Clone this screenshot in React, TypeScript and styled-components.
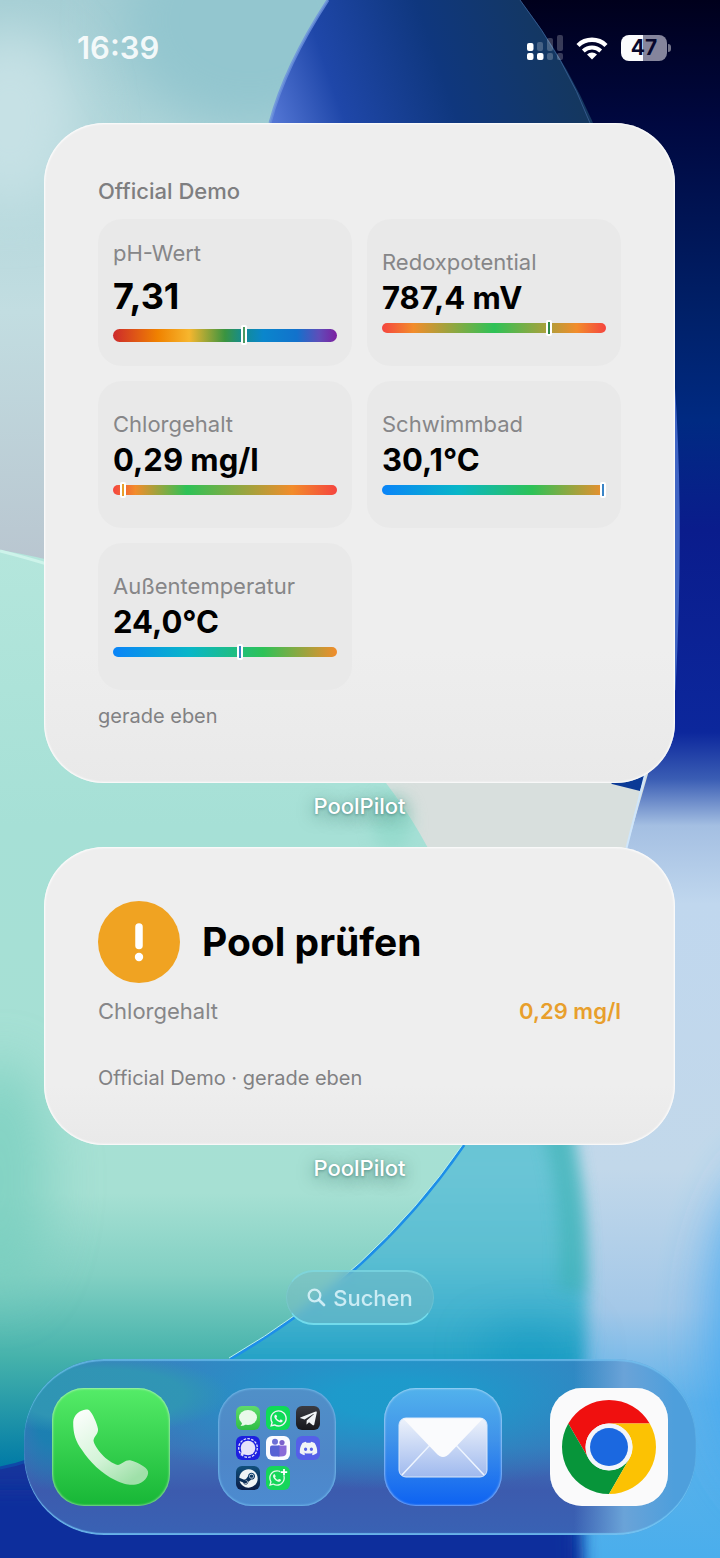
import React from "react";
import styled, { createGlobalStyle } from "styled-components";
import { FaDiscord, FaSteam, FaTelegramPlane, FaWhatsapp } from "react-icons/fa";

const GlobalStyle = createGlobalStyle`
  * {
    box-sizing: border-box;
  }

  body {
    margin: 0;
    font-family: Inter, "Liberation Sans", sans-serif;
    -webkit-font-smoothing: antialiased;
  }
`;

// Screen
const Screen = styled.div`
  position: relative;
  z-index: 0;
  display: flex;
  flex-direction: column;
  min-height: 100vh;
  padding-bottom: 23px;
  overflow: hidden;
`;

const WallpaperSvg = styled.svg`
  position: absolute;
  inset: 0;
  z-index: -1;
  width: 100%;
  height: 100%;
`;

// Status bar
const StatusBar = styled.header`
  display: flex;
  align-items: center;
  justify-content: space-between;
  height: 96px;
  margin-bottom: 27px;
  padding: 0 49px 0 77px;
`;

const Clock = styled.time`
  color: rgba(255, 255, 255, 0.88);
  font-size: 31px;
  font-weight: 600;
  line-height: 40px;
`;

const StatusIcons = styled.div`
  display: flex;
  align-items: center;
  gap: 13px;
`;

const Battery = styled.div`
  display: flex;
  align-items: center;
  gap: 1px;

  &::after {
    content: "";
    width: 3px;
    height: 8px;
    border-radius: 0 4px 4px 0;
    background: rgba(255, 255, 255, 0.45);
  }
`;

const BatteryBody = styled.div<{ $level: number }>`
  width: 46px;
  height: 26px;
  border-radius: 8px;
  background: linear-gradient(
    to right,
    #fbfbfd ${(p) => p.$level}%,
    #85859c ${(p) => p.$level}%
  );
  color: #07082c;
  font-size: 21px;
  font-weight: 700;
  line-height: 26px;
  text-align: center;
`;

// Widgets
const Widgets = styled.main`
  display: flex;
  flex-direction: column;
  gap: 27px;
  padding: 0 45px 0 44px;
`;

const WidgetSlot = styled.section`
  display: flex;
  flex-direction: column;
  gap: 9px;
`;

const Widget = styled.div`
  padding: 54px;
  border-radius: 60px;
  background: linear-gradient(#eeeeee 80%, #e9e9e9);
  box-shadow: inset 0 0 2px 1px rgba(255, 255, 255, 0.9);
`;

const WidgetName = styled.div`
  color: #fff;
  font-size: 22px;
  font-weight: 500;
  line-height: 28px;
  text-align: center;
  text-shadow: 0 1px 3px rgba(0, 60, 60, 0.4), 0 4px 16px rgba(0, 70, 60, 0.5);
`;

const PoolName = styled.h2`
  margin: 0 0 14px;
  color: #7e7e80;
  font-size: 22px;
  font-weight: 500;
  line-height: 28px;
`;

const Caption = styled.p`
  margin: 0;
  color: #818183;
  font-size: 20px;
  line-height: 26px;
`;

const TileGrid = styled.div`
  display: grid;
  grid-template-columns: 1fr 1fr;
  gap: 15px;
  margin-bottom: 13px;
`;

const Tile = styled.div<{ $large?: boolean }>`
  display: flex;
  flex-direction: column;
  justify-content: center;
  gap: ${(p) => (p.$large ? 7 : 3)}px;
  height: 147px;
  padding: 0 15px 1px;
  border-radius: 24px;
  background: #e9e9e9;
`;

const Label = styled.span`
  color: #868688;
  font-size: 22px;
  line-height: 28px;
`;

const Value = styled.strong<{ $large?: boolean }>`
  color: #000;
  font-size: ${(p) => (p.$large ? 36 : 31)}px;
  font-weight: 700;
  line-height: ${(p) => (p.$large ? 44 : 38)}px;
`;

const Gauge = styled.div<{ $large?: boolean }>`
  position: relative;
  display: flex;
  align-items: center;
  height: ${(p) => (p.$large ? 20 : 16)}px;
`;

const Track = styled.div<{ $scale: string; $large?: boolean }>`
  flex: 1;
  height: ${(p) => (p.$large ? 13 : 10)}px;
  border-radius: 7px;
  background: linear-gradient(to right, ${(p) => p.$scale});
`;

const Marker = styled.div<{ $color: string }>`
  position: absolute;
  top: 0;
  bottom: 0;
  width: 6px;
  margin-left: -4px;
  border: 2px solid #fff;
  border-radius: 2px;
  background: ${(p) => p.$color};
`;

// Alert widget
const AlertHead = styled.div`
  display: flex;
  align-items: center;
  gap: 22px;
  margin-bottom: 14px;
`;

const AlertBadge = styled.svg`
  flex: none;
  width: 82px;
  height: 82px;
`;

const AlertTitle = styled.h1`
  margin: 0;
  color: #000;
  font-size: 39px;
  font-weight: 700;
  line-height: 48px;
`;

const AlertRow = styled.div`
  display: flex;
  justify-content: space-between;
  margin-bottom: 40px;
`;

const AlertValue = styled.span`
  color: #e89f2c;
  font-size: 22px;
  font-weight: 600;
  line-height: 28px;
`;

// Search pill
const SearchButton = styled.button`
  display: flex;
  align-items: center;
  align-self: center;
  justify-content: center;
  gap: 7px;
  height: 55px;
  margin: auto 0 34px;
  padding: 0 20px;
  border: 1px solid rgba(140, 235, 245, 0.2);
  border-top: 2px solid rgba(130, 225, 235, 0.6);
  border-bottom: 2px solid rgba(120, 230, 245, 0.8);
  border-radius: 28px;
  background: rgba(120, 185, 195, 0.5);
  backdrop-filter: blur(6px);
  color: rgba(222, 245, 252, 0.85);
  font: 500 22px/28px Inter, "Liberation Sans", sans-serif;
`;

// Dock
const Dock = styled.nav`
  display: flex;
  align-items: center;
  justify-content: space-between;
  margin: 0 24px;
  padding: 29px 28px;
  border-radius: 80px;
  background:
    radial-gradient(ellipse 130px 40px at 76px 36px, rgba(48, 150, 180, 0.95) 65%, transparent),
    radial-gradient(ellipse 40px 70px at 26px 62px, rgba(20, 130, 175, 0.8) 30%, transparent),
    linear-gradient(to right, transparent 550px, #6aa3d8 600px, #4e9fdc 650px),
    radial-gradient(ellipse 300px 90px at 370px 40px, rgba(28, 156, 204, 0.95) 20%, transparent),
    linear-gradient(#3b7fbf, #3e72b8 50%, #3c5bae 75%, #3962b4);
  box-shadow:
    inset 0 2px 1px rgba(120, 200, 245, 0.65),
    inset 0 -2px 1px rgba(120, 205, 250, 0.75);
`;

const AppIcon = styled.a<{ $fill: string }>`
  display: block;
  width: 118px;
  height: 118px;
  border-radius: 32px;
  background: ${(p) => p.$fill};
  box-shadow: inset 0 0 2px 1px rgba(255, 255, 255, 0.45);

  > svg {
    display: block;
    width: 100%;
    height: 100%;
  }
`;

const Folder = styled.a`
  display: grid;
  grid-template-columns: repeat(3, 24px);
  grid-auto-rows: 24px;
  gap: 6px;
  width: 118px;
  height: 118px;
  padding: 18px;
  border-radius: 34px;
  background: linear-gradient(#5090c8, #4e86c8 60%, #4c8bd0);
  box-shadow: inset 0 0 2px 1px rgba(125, 200, 245, 0.7);
`;

const MiniApp = styled.span<{ $fill: string }>`
  display: flex;
  align-items: center;
  justify-content: center;
  border-radius: 6px;
  background: ${(p) => p.$fill};
  color: #f1f4f6;
  font-size: 19px;
`;

const Wallpaper = () => (
  <WallpaperSvg viewBox="0 0 720 1558" preserveAspectRatio="xMidYMid slice" aria-hidden>
    <defs>
      <linearGradient id="sky" x1="0" y1="0" x2="0" y2="1">
        <stop offset="0" stopColor="#a5ced4" />
        <stop offset="0.1" stopColor="#b0d6da" />
        <stop offset="0.2" stopColor="#c2dde1" />
        <stop offset="0.36" stopColor="#b9c6d0" />
      </linearGradient>
      <linearGradient id="lens" x1="270" y1="140" x2="560" y2="40" gradientUnits="userSpaceOnUse">
        <stop offset="0" stopColor="#5a7cda" />
        <stop offset="0.25" stopColor="#1f47a9" />
        <stop offset="0.6" stopColor="#0f377e" />
        <stop offset="1" stopColor="#14375f" />
      </linearGradient>
      <linearGradient id="navy" x1="0" y1="0" x2="0" y2="1">
        <stop offset="0" stopColor="#00001c" />
        <stop offset="0.08" stopColor="#000840" />
        <stop offset="0.2" stopColor="#002068" />
        <stop offset="0.27" stopColor="#002a82" />
        <stop offset="0.34" stopColor="#0a1c8c" />
        <stop offset="0.47" stopColor="#0c279c" />
        <stop offset="0.5" stopColor="#3a5db4" />
        <stop offset="0.53" stopColor="#a4bfe2" />
        <stop offset="0.58" stopColor="#c0d7ee" />
        <stop offset="0.75" stopColor="#c2d8ea" />
        <stop offset="0.84" stopColor="#a4c8e8" />
        <stop offset="0.9" stopColor="#60b2ea" />
        <stop offset="1" stopColor="#4aaeec" />
      </linearGradient>
      <linearGradient id="leaf" x1="0" y1="0" x2="0" y2="1">
        <stop offset="0" stopColor="#b4e6dc" />
        <stop offset="0.3" stopColor="#a6e0d6" />
        <stop offset="0.7" stopColor="#a6e0d3" />
        <stop offset="0.79" stopColor="#82d0c3" />
        <stop offset="0.88" stopColor="#45b2ab" />
        <stop offset="1" stopColor="#007aa6" />
      </linearGradient>
      <linearGradient id="orb" x1="0" y1="1000" x2="0" y2="1558" gradientUnits="userSpaceOnUse">
        <stop offset="0" stopColor="#5cbfcb" />
        <stop offset="0.3" stopColor="#6ac5d6" />
        <stop offset="0.45" stopColor="#5cbfd2" />
        <stop offset="0.56" stopColor="#42b2cf" />
        <stop offset="0.66" stopColor="#1f9fc4" />
        <stop offset="0.8" stopColor="#1566c0" />
        <stop offset="1" stopColor="#0a2e9c" />
      </linearGradient>
      <filter id="soft8" filterUnits="userSpaceOnUse" x="-200" y="-200" width="1120" height="1960">
        <feGaussianBlur stdDeviation="8" />
      </filter>
      <filter id="soft26" filterUnits="userSpaceOnUse" x="-200" y="-200" width="1120" height="1960">
        <feGaussianBlur stdDeviation="26" />
      </filter>
    </defs>

    <rect width="720" height="1558" fill="url(#sky)" />
    <ellipse cx="250" cy="20" rx="130" ry="110" fill="#93c6cf" filter="url(#soft26)" />
    <ellipse cx="10" cy="120" rx="70" ry="90" fill="#c6e1e5" filter="url(#soft26)" />

    <path d="M500 0H720V1558H520V600Z" fill="url(#navy)" />
    <ellipse cx="780" cy="1330" rx="70" ry="170" fill="#3fa8f2" opacity="0.9" filter="url(#soft26)" />
    <path d="M328 0Q285 66 270 123V200H620Q590 90 520 0Z" fill="url(#lens)" />
    <path d="M328 0Q285 66 270 123" fill="none" stroke="#6a90dc" strokeWidth="3" opacity="0.8" />
    <path d="M520 0Q566 60 590 123" fill="none" stroke="#33588c" strokeWidth="1" />
    <path d="M672 380Q682 520 673 690" fill="none" stroke="#3f64c4" strokeWidth="5" />

    {/* pale gap between the two widgets */}
    <path d="M360 760H652L626 850H360Z" fill="#d8dfdd" />
    <path d="M612 784L640 791L645 775L600 770Z" fill="#0b3a96" />
    <path d="M645 775L626 850" stroke="#cfe6fb" strokeWidth="2" />

    <path
      d="M440 1000H540Q598 1180 584 1380Q580 1490 584 1600H-60V1400Z"
      fill="url(#orb)"
      filter="url(#soft8)"
    />
    <path
      d="M548 1100Q578 1200 572 1290"
      fill="none"
      stroke="#3bb0b0"
      strokeWidth="26"
      opacity="0.55"
      filter="url(#soft8)"
    />
    <ellipse cx="530" cy="1350" rx="50" ry="16" fill="#0c8fbd" opacity="0.7" filter="url(#soft26)" />
    <path d="M0 1462Q140 1432 234 1359H260V1558H0Z" fill="#15349c" />
    <path d="M-60 1490H572V1620H-60Z" fill="#0e2f9c" filter="url(#soft8)" />

    <path
      d="M0 550Q240 590 386 783Q460 880 478 1000Q490 1080 464 1145Q375 1275 230 1359Q130 1440 0 1468Z"
      fill="url(#leaf)"
    />
    <path d="M0 551Q24 557 60 568" fill="none" stroke="#cdf3ea" strokeWidth="3" />
    <ellipse cx="392" cy="822" rx="20" ry="30" fill="#86d6c4" opacity="0.5" filter="url(#soft8)" />
    <ellipse cx="0" cy="1180" rx="50" ry="120" fill="#74cdbd" opacity="0.7" filter="url(#soft26)" />
    <path d="M464 1145Q375 1275 230 1359" fill="none" stroke="#1d8fe8" strokeWidth="3" />
    <path d="M463 1144Q374 1274 229 1358" fill="none" stroke="#b9f0ee" strokeWidth="1" />
    <path d="M0 1468Q16 1465 30 1460" fill="none" stroke="#0f49a8" strokeWidth="3" />
  </WallpaperSvg>
);

const SignalIcon = () => (
  <svg width="36" height="26" viewBox="0 0 36 26" fill="#fff" aria-label="Mobilfunk" role="img">
    <rect x="0" y="8" width="6.500" height="8" rx="2" />
    <g opacity="0.22">
      <rect x="10" y="7" width="6" height="9" rx="2" />
      <rect x="20" y="3" width="6" height="13" rx="2" />
      <rect x="30" y="0" width="6" height="16" rx="2" />
      <rect x="20" y="18" width="6" height="7" rx="2" />
      <rect x="30" y="18" width="6" height="7" rx="2" />
    </g>
    <rect x="0" y="18" width="6.500" height="7" rx="2" />
    <rect x="10" y="18" width="6.500" height="7" rx="2" />
  </svg>
);

const WifiIcon = () => (
  <svg width="32" height="24" viewBox="0 0 32 24" fill="none" aria-label="WLAN" role="img">
    <path d="M2 9.500a20 20 0 0 1 28 0" stroke="#fff" strokeWidth="4.400" />
    <path d="M7.300 15a12.600 12.600 0 0 1 17.400 0" stroke="#fff" strokeWidth="4" />
    <path d="M16 23.500L11 18.400a7.200 7.200 0 0 1 10 0Z" fill="#fff" />
  </svg>
);

const SearchIcon = () => (
  <svg width="19" height="19" viewBox="0 0 19 19" fill="none" stroke="currentColor" strokeLinecap="round">
    <circle cx="7.500" cy="7.500" r="5.800" strokeWidth="2.300" />
    <path d="M12 12L17 17" strokeWidth="2.800" />
  </svg>
);

const PhoneGlyph = () => (
  <svg viewBox="0 0 118 118">
    <defs>
      <linearGradient id="handset" x1="0" y1="0" x2="0.700" y2="1">
        <stop offset="0" stopColor="#fff" />
        <stop offset="0.600" stopColor="#d5f4d9" />
        <stop offset="1" stopColor="#9fe0a9" />
      </linearGradient>
    </defs>
    <path
      d="M34 21.500C28 22 21.500 27 21.200 34C21 46 24 54 30 62C37 73 50 86 63 92C72 96.500 78 97.500 84 96.500C92 95 97 88 96 83.500C95 79 85 74 79 72.500C73 71.500 71 76 66 77C61 76 54 71 50 66.500C45 61 42 56 41.500 52.500C42 48 46.500 46 46 41C45 35 40.500 25.500 37.500 22.500C36.500 21.500 35.500 21.300 34 21.500Z"
      fill="url(#handset)"
    />
  </svg>
);

const MailGlyph = () => (
  <svg viewBox="0 0 118 118">
    <defs>
      <linearGradient id="envelope" x1="0" y1="0" x2="0" y2="1">
        <stop offset="0" stopColor="#eef3fb" />
        <stop offset="1" stopColor="#9fb9ee" />
      </linearGradient>
    </defs>
    <rect x="15" y="30" width="88" height="59" rx="7" fill="url(#envelope)" stroke="#d8e8fb" />
    <path d="M18 87L46 57M100 87L72 57" stroke="#eef5ff" strokeWidth="1.500" />
    <path d="M19 30.500H99L66 65Q59 73 52 65Z" fill="#fafbfd" />
  </svg>
);

const ChromeGlyph = () => (
  <svg viewBox="0 0 118 118">
    <path d="M18.300 35.500A47 47 0 0 1 99.700 35.500H59A23.500 23.500 0 0 0 38.700 70.700Z" fill="#f0100f" />
    <path d="M18.300 35.500L38.700 70.700A23.500 23.500 0 0 0 79.300 70.700L59 106A47 47 0 0 1 18.300 35.500Z" fill="#07953a" />
    <path d="M99.700 35.500A47 47 0 0 1 59 106L79.300 70.700A23.500 23.500 0 0 0 59 35.500Z" fill="#fcc203" />
    <circle cx="59" cy="59" r="23.500" fill="#f3f5fa" />
    <circle cx="59" cy="59" r="19" fill="#1b68e0" />
  </svg>
);

const BubbleGlyph = () => (
  <svg width="20" height="20" viewBox="0 0 20 20" fill="#e9f9ea">
    <ellipse cx="10" cy="9.500" rx="9" ry="7.500" />
    <path d="M4 13Q4.500 16.500 2.500 18Q6.500 18 8.500 15.500Z" />
  </svg>
);

const SignalAppGlyph = () => (
  <svg width="22" height="22" viewBox="0 0 22 22">
    <circle cx="11" cy="11" r="9.300" fill="none" stroke="#e4e2fb" strokeWidth="1.300" strokeDasharray="2.600 1.300" />
    <circle cx="11" cy="11" r="7.300" fill="#e6e2fa" />
    <path d="M5 13L3.500 18.500L9 17Z" fill="#e6e2fa" />
  </svg>
);

const TeamsGlyph = () => (
  <svg width="18" height="20" viewBox="0 0 18 20">
    <circle cx="6" cy="3.800" r="3" fill="#6b6fd6" />
    <circle cx="13" cy="4.500" r="2.600" fill="#7c62cc" />
    <path d="M9 7.500H17.500V14Q17.500 18.500 12 18.500H9Z" fill="#8a6ad8" />
    <path d="M1 9.500Q1 7.500 3 7.500H10.500V18.500H5Q1 18.500 1 14Z" fill="#5661d4" />
  </svg>
);

const WhatsAppPlus = () => (
  <svg width="20" height="20" viewBox="0 0 20 20">
    <FaWhatsapp x="0" y="1" size={18} color="#e3fbe8" />
    <path d="M16 0.500V8M12.300 4.200H19.700" stroke="#16d65a" strokeWidth="5" />
    <path d="M16 1V7.400M12.800 4.200H19.200" stroke="#fff" strokeWidth="1.800" />
  </svg>
);

const scales = {
  ph: "#cd2a2c, #f08200 20%, #f6b62e 34%, #3a9440 50%, #138c92 58%, #0a86cc 67%, #1272cc 82%, #5f4db9 92%, #7d1fa0",
  redox: "#f5453f, #f28c2b 14%, #2dc257 50%, #f28c2b 87%, #f5453f",
  chlorine: "#f5453f, #f28c2b 10%, #2dc257 33%, #f28c2b 80%, #f5453f",
  temperature: "#0a84f8, #08b6c8 34%, #2dc257 67%, #f28c2b",
};

interface Reading {
  label: string;
  value: string;
  scale: string;
  position: number;
  marker: string;
  large?: boolean;
}

const readings: Reading[] = [
  { label: "pH-Wert", value: "7,31", scale: scales.ph, position: 59, marker: "#4b9a62", large: true },
  { label: "Redoxpotential", value: "787,4 mV", scale: scales.redox, position: 75, marker: "#2f8a48" },
  { label: "Chlorgehalt", value: "0,29 mg/l", scale: scales.chlorine, position: 5, marker: "#e89f2c" },
  { label: "Schwimmbad", value: "30,1°C", scale: scales.temperature, position: 99, marker: "#3a84c6" },
  { label: "Außentemperatur", value: "24,0°C", scale: scales.temperature, position: 57, marker: "#3a84c6" },
];

const ReadingTile: React.FC<Reading> = ({ label, value, scale, position, marker, large }) => (
  <Tile $large={large}>
    <Label>{label}</Label>
    <Value $large={large}>{value}</Value>
    <Gauge $large={large}>
      <Track $scale={scale} $large={large} />
      <Marker $color={marker} style={{ left: `${position}%` }} />
    </Gauge>
  </Tile>
);

const App: React.FC = () => {
  return (
    <Screen>
      <GlobalStyle />
      <Wallpaper />

      <StatusBar>
        <Clock>16:39</Clock>
        <StatusIcons>
          <SignalIcon />
          <WifiIcon />
          <Battery>
            <BatteryBody $level={47}>47</BatteryBody>
          </Battery>
        </StatusIcons>
      </StatusBar>

      <Widgets>
        <WidgetSlot>
          <Widget>
            <PoolName>Official Demo</PoolName>
            <TileGrid>
              {readings.map((reading) => (
                <ReadingTile key={reading.label} {...reading} />
              ))}
            </TileGrid>
            <Caption>gerade eben</Caption>
          </Widget>
          <WidgetName>PoolPilot</WidgetName>
        </WidgetSlot>

        <WidgetSlot>
          <Widget>
            <AlertHead>
              <AlertBadge viewBox="0 0 82 82">
                <circle cx="41" cy="41" r="41" fill="#f0a322" />
                <path d="M41 26V44.500" stroke="#fff" strokeWidth="7.500" strokeLinecap="round" />
                <circle cx="41" cy="56" r="4.200" fill="#fff" />
              </AlertBadge>
              <AlertTitle>Pool prüfen</AlertTitle>
            </AlertHead>
            <AlertRow>
              <Label>Chlorgehalt</Label>
              <AlertValue>0,29 mg/l</AlertValue>
            </AlertRow>
            <Caption>Official Demo · gerade eben</Caption>
          </Widget>
          <WidgetName>PoolPilot</WidgetName>
        </WidgetSlot>
      </Widgets>

      <SearchButton type="button">
        <SearchIcon />
        Suchen
      </SearchButton>

      <Dock>
        <AppIcon href="#phone" aria-label="Telefon" $fill="linear-gradient(#55ec68, #17b636)">
          <PhoneGlyph />
        </AppIcon>
        <Folder href="#folder" aria-label="Ordner">
          <MiniApp $fill="linear-gradient(#5fdc6a, #2fbd45)">
            <BubbleGlyph />
          </MiniApp>
          <MiniApp $fill="#0fdb58">
            <FaWhatsapp />
          </MiniApp>
          <MiniApp $fill="linear-gradient(#3a3b42, #17181d)">
            <FaTelegramPlane />
          </MiniApp>
          <MiniApp $fill="#1d1fe0">
            <SignalAppGlyph />
          </MiniApp>
          <MiniApp $fill="#fbfbff">
            <TeamsGlyph />
          </MiniApp>
          <MiniApp $fill="#5560e8">
            <FaDiscord />
          </MiniApp>
          <MiniApp $fill="linear-gradient(#10507c, #0a1a44)">
            <FaSteam />
          </MiniApp>
          <MiniApp $fill="#16d65a">
            <WhatsAppPlus />
          </MiniApp>
        </Folder>
        <AppIcon href="#mail" aria-label="Mail" $fill="linear-gradient(#52b2ec, #3f92ea 45%, #0d62f2)">
          <MailGlyph />
        </AppIcon>
        <AppIcon href="#chrome" aria-label="Chrome" $fill="#fafafb">
          <ChromeGlyph />
        </AppIcon>
      </Dock>
    </Screen>
  );
};

export default App;
